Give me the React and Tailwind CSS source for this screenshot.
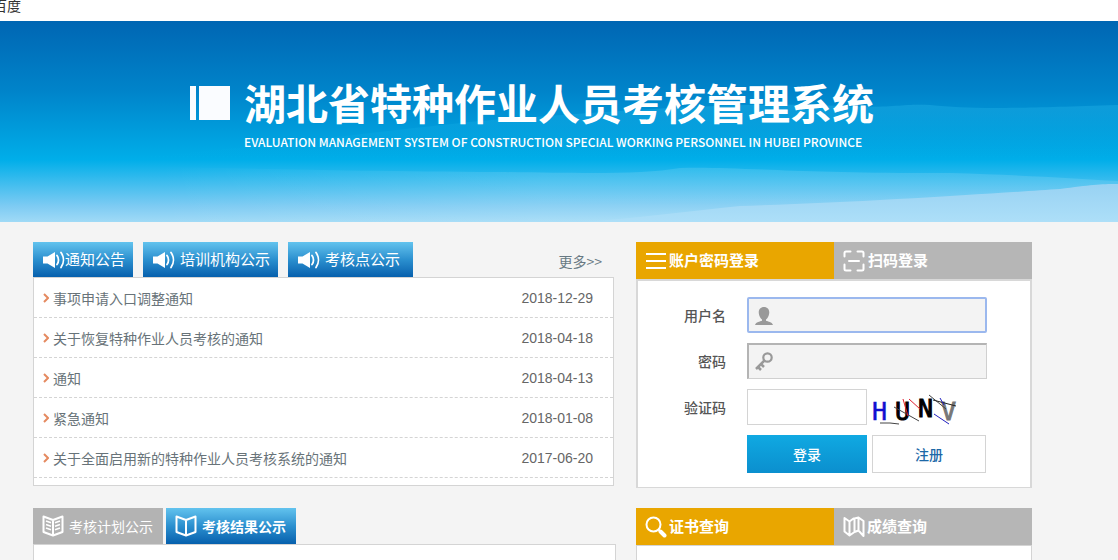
import React from 'react';

const notices = [
  ['事项申请入口调整通知', '2018-12-29'],
  ['关于恢复特种作业人员考核的通知', '2018-04-18'],
  ['通知', '2018-04-13'],
  ['紧急通知', '2018-01-08'],
  ['关于全面启用新的特种作业人员考核系统的通知', '2017-06-20'],
];

function SpeakerIcon() {
  return (
    <svg className="h-[18px] w-[22px] shrink-0" viewBox="0 0 22 18" fill="none" aria-hidden="true">
      <path d="M0 5.500h4.500L12 1v16l-7.500-4.500H0z" fill="#fff" />
      <path d="M14 4.500c2 2.500 2 6.500 0 9M18 1.500c3.200 4.500 3.200 10.500 0 15" stroke="#fff" strokeWidth="1.800" strokeLinecap="round" />
    </svg>
  );
}

function MenuIcon() {
  return (
    <svg className="h-5 w-5 shrink-0" viewBox="0 0 20 20" aria-hidden="true">
      <path d="M0 3h20M0 10h20M0 17h20" stroke="#fff" strokeWidth="2" />
    </svg>
  );
}

function ScanIcon() {
  return (
    <svg className="h-[22px] w-[22px] shrink-0" viewBox="0 0 22 22" fill="none" aria-hidden="true">
      <path d="M1.500 6.500V3q0-1.500 1.500-1.500H7.500M14.500 1.500h4.500q1.500 0 1.500 1.500v3.500M20.500 14.500v4.500q0 1.500-1.500 1.500h-4.500M7.500 20.500H3q-1.500 0-1.500-1.500v-4.500M6 11h10" stroke="#fff" strokeWidth="2" strokeLinecap="round" />
    </svg>
  );
}

function SearchIcon() {
  return (
    <svg className="h-[22px] w-[22px] shrink-0" viewBox="0 0 22 22" fill="none" aria-hidden="true">
      <circle cx="8.500" cy="8.500" r="7" stroke="#fff" strokeWidth="2" />
      <path d="M13.500 13.500l2 2" stroke="#fff" strokeWidth="2" />
      <path d="M15.500 15.500l4 4" stroke="#fff" strokeWidth="4" strokeLinecap="round" />
    </svg>
  );
}

function MapIcon() {
  return (
    <svg className="h-[22px] w-[22px] shrink-0" viewBox="0 0 22 22" fill="none" aria-hidden="true">
      <path d="M1.500 2l5 3.500v14l-5-4zM6.500 5.500l4-3h1v13.500l-5 3.500M11.500 2.500l4-1v13l-4 1.500M15.500 1.500l5 3.500v15l-5-5.500" stroke="#fff" strokeWidth="2" strokeLinejoin="round" />
    </svg>
  );
}

function BookIcon({ lines }) {
  return (
    <svg className="h-[22px] w-[22px] shrink-0" viewBox="0 0 22 22" fill="none" aria-hidden="true">
      <path d="M1.500 1.500L11 5l9.500-3.500v15.500L11 20.500 1.500 17zM11 5v15" stroke="#fff" strokeWidth="2" strokeLinejoin="round" />
      {lines && <path d="M4 6l5 1.800M4 9.500l5 1.800M4 13l5 1.800M18 6l-5 1.800M18 9.500l-5 1.800M18 13l-5 1.800" stroke="#fff" strokeWidth="1.500" />}
    </svg>
  );
}

function Banner() {
  return (
    <header className="relative h-[201px] overflow-hidden">
      <svg className="absolute inset-0 h-full w-full" viewBox="0 0 1118 201" preserveAspectRatio="none" aria-hidden="true">
        <defs>
          <linearGradient id="sky" x1="0" y1="0" x2="0" y2="1">
            <stop offset="0" stopColor="#0066b3" />
            <stop offset=".35" stopColor="#0084ca" />
            <stop offset=".69" stopColor="#00aee9" />
            <stop offset=".75" stopColor="#20b6ec" />
            <stop offset=".92" stopColor="#7dcbf3" />
            <stop offset="1" stopColor="#a0daf6" />
          </linearGradient>
          <linearGradient id="haze" x1="0" y1="0" x2="0" y2="1">
            <stop offset="0" stopColor="#19a6e0" stopOpacity=".6" />
            <stop offset="1" stopColor="#00b0ea" stopOpacity="0" />
          </linearGradient>
          <linearGradient id="mist" x1="0" y1="0" x2="1" y2="0">
            <stop offset="0" stopColor="#fff" stopOpacity="0" />
            <stop offset=".4" stopColor="#fff" stopOpacity=".12" />
            <stop offset="1" stopColor="#fff" stopOpacity=".12" />
          </linearGradient>
          <linearGradient id="shore" x1="0" y1="0" x2="0" y2="1">
            <stop offset="0" stopColor="#98d2f3" />
            <stop offset="1" stopColor="#addff8" />
          </linearGradient>
        </defs>
        <rect width="1118" height="201" fill="url(#sky)" />
        <path d="M100 140C300 122 380 110 480 100C620 90 720 82 820 84C890 89 900 82 930 84C970 88 1000 88 1118 84V140H100z" fill="url(#haze)" />
        <path d="M160 146C280 148 350 150 500 151C580 152 640 154 680 147C730 145 800 153 950 152C1020 154 1070 157 1118 160V201H160z" fill="url(#mist)" />
        <path d="M580 201C630 198 690 190 740 185C850 182 1000 172 1060 168C1090 164 1100 163 1118 163V201z" fill="url(#shore)" />
      </svg>
      <div className="relative flex gap-[14px] pt-[57px] pl-[190px] text-white">
        <svg className="mt-2 h-[34px] w-10 shrink-0" viewBox="0 0 40 34" aria-hidden="true">
          <path d="M0 0h6v34H0zM9 0h31v34H9z" fill="#fafcff" />
        </svg>
        <div className="whitespace-nowrap">
          <h1 className="text-[42px] leading-[48px] font-bold">湖北省特种作业人员考核管理系统</h1>
          <p className="text-xs leading-[32px] font-medium">
            EVALUATION MANAGEMENT SYSTEM OF CONSTRUCTION SPECIAL WORKING PERSONNEL IN HUBEI PROVINCE
          </p>
        </div>
      </div>
    </header>
  );
}

const blueTab = 'bg-linear-to-b from-[#62c3ee] via-[#2b90cf] to-[#0660ad] text-white';

function NoticePanel() {
  return (
    <section className="mr-0.5">
      <div className="flex items-start gap-[10px]">
        <button className={`flex h-[35px] items-center pr-2 pl-[10px] text-[15px] ${blueTab}`}>
          <SpeakerIcon />通知公告
        </button>
        <button className={`flex h-[35px] items-center gap-[5px] pr-2 pl-[10px] text-[15px] ${blueTab}`}>
          <SpeakerIcon />培训机构公示
        </button>
        <button className={`flex h-[35px] items-center gap-[5px] pr-[13px] pl-[10px] text-[15px] ${blueTab}`}>
          <SpeakerIcon />考核点公示
        </button>
        <a href="#more" className="mt-[9px] mr-3 ml-auto text-sm text-[#687983]">更多&gt;&gt;</a>
      </div>
      <div className="border border-[#d4d4d4] bg-white pb-[7px]">
        <ul>
          {notices.map(([title, date]) => (
            <li key={title} className="flex h-10 items-center border-b border-dashed border-[#d4d4d4] pr-5 pl-[9px] text-sm text-[#687379]">
              <svg className="mr-[4px] h-[10px] w-[6px]" viewBox="0 0 6 10" fill="none" aria-hidden="true">
                <path d="M1 1l4 4-4 4" stroke="#e58a60" strokeWidth="2" />
              </svg>
              <a href="#notice">{title}</a>
              <time className="ml-auto font-['Liberation_Sans',sans-serif] text-[#666]">{date}</time>
            </li>
          ))}
        </ul>
      </div>
    </section>
  );
}

function Captcha() {
  return (
    <svg className="h-9 w-[90px] overflow-visible" viewBox="0 0 90 36" fontFamily="DejaVu Sans Mono, monospace" fontSize="25" role="img" aria-label="验证码图片">
      <text x="0" y="31" fill="#1010d0" stroke="#1010d0" strokeWidth=".5">H</text>
      <text x="23" y="31" fill="#000" stroke="#000" strokeWidth="1">U</text>
      <text x="46" y="28" fill="#000" stroke="#000" strokeWidth="1">N</text>
      <text x="69" y="31" fill="#777" stroke="#777" strokeWidth="1">V</text>
      <g fill="none" strokeWidth="1">
        <path d="M8 34h10l9 1M22 18l25 14M57 6l17 14" stroke="#444" />
        <path d="M61 11l23 6" stroke="#222" />
        <path d="M31 10l5 17M37 10l11 10" stroke="#e02030" />
        <path d="M62 25l15 10M68 9l4 7" stroke="#2020c0" />
      </g>
    </svg>
  );
}

function LoginPanel() {
  return (
    <section>
      <div className="grid h-[37px] grid-cols-2 text-[15px] font-bold text-white">
        <button className="flex items-center gap-[3px] bg-[#e9a600] pl-[10px]"><MenuIcon />账户密码登录</button>
        <button className="flex items-center gap-[3px] bg-[#b6b6b6] pl-[9px]"><ScanIcon />扫码登录</button>
      </div>
      <form className="grid grid-cols-[88px_1fr] items-center gap-x-[21px] gap-y-[10px] border-2 border-b border-[#d8d8d8] bg-white pt-4 pr-[43px] pb-[14px] text-sm" onSubmit={(e) => e.preventDefault()}>
        <label htmlFor="user" className="text-right font-medium text-[#555]">用户名</label>
        <div className="relative">
          <input id="user" type="text" className="block h-9 w-full rounded-xs border-2 border-[#9bb8ee] bg-[#f3f3f3] pl-8 outline-none" />
          <svg className="pointer-events-none absolute top-[10px] left-2 h-[18px] w-[18px]" viewBox="0 0 18 18" fill="#999" aria-hidden="true">
            <path d="M9 0c3.700 0 5.600 2.700 5.200 6.300-.3 2.900-1.700 5.200-3.200 6.200v1.200c2 1 6 .8 7 4.300H0c1-3.500 5-3.300 7-4.300v-1.200C5.500 11.500 4.100 9.200 3.800 6.300 3.400 2.700 5.300 0 9 0z" />
          </svg>
        </div>
        <label htmlFor="pass" className="text-right font-medium text-[#555]">密码</label>
        <div className="relative">
          <input id="pass" type="password" className="block h-9 w-full border border-t-2 border-l-2 border-[#d0d0d0] border-t-[#b4b4b4] border-l-[#b4b4b4] bg-[#f3f3f3] pl-8 outline-none" />
          <svg className="pointer-events-none absolute top-[9px] left-2 h-[19px] w-[18px]" viewBox="0 0 18 19" fill="none" stroke="#999" aria-hidden="true">
            <circle cx="12.500" cy="5.500" r="4.200" strokeWidth="2.200" />
            <path d="M9.500 8.500L1 17M3 15l3 3M6 12l3 3" strokeWidth="2.500" />
          </svg>
        </div>
        <label htmlFor="code" className="text-right font-medium text-[#555]">验证码</label>
        <div className="flex gap-[5px]">
          <input id="code" type="text" className="block h-9 w-[120px] border border-[#d4d4d4] bg-white px-2 outline-none" />
          <Captcha />
        </div>
        <div className="col-start-2 flex gap-[5px] pr-px font-medium">
          <button type="submit" className="h-[38px] w-[120px] bg-linear-to-b from-[#10a9e2] to-[#0b8fce] text-white">登录</button>
          <button type="button" className="h-[38px] flex-1 border border-[#d4d4d4] bg-white text-[#1d68a7]">注册</button>
        </div>
      </form>
    </section>
  );
}

function ExamPanel() {
  return (
    <section className="flex flex-col">
      <div className="flex gap-[3px] text-sm">
        <button className="flex h-9 items-center gap-[5px] bg-[#b3b3b3] pr-[10px] pl-[9px] text-white"><BookIcon lines />考核计划公示</button>
        <button className={`flex h-9 items-center gap-[5px] pr-[10px] pl-[9px] font-bold ${blueTab}`}><BookIcon />考核结果公示</button>
      </div>
      <div className="flex-1 border border-b-0 border-[#d4d4d4] bg-white" />
    </section>
  );
}

function QueryPanel() {
  return (
    <section className="flex flex-col">
      <div className="grid h-[37px] grid-cols-2 text-[15px] font-bold text-white">
        <button className="flex items-center gap-[2px] bg-[#e9a600] pl-[9px]"><SearchIcon />证书查询</button>
        <button className="flex items-center gap-[2px] bg-[#b6b6b6] pl-[9px]"><MapIcon />成绩查询</button>
      </div>
      <div className="flex-1 border border-b-0 border-[#d4d4d4] bg-white" />
    </section>
  );
}

export default function App() {
  return (
    <div className="flex min-h-screen flex-col bg-[#f4f4f4] font-['Noto_Sans_CJK_SC',sans-serif]">
      <div className="h-[21px] overflow-hidden bg-white text-sm leading-[10px] text-[#333]">
        <a href="#baidu" className="-ml-[7px] block">百度</a>
      </div>
      <Banner />
      <main className="grid flex-1 grid-cols-[583fr_396fr] grid-rows-[auto_1fr] gap-x-5 gap-y-5 pt-5 pr-[86px] pl-[33px]">
        <NoticePanel />
        <LoginPanel />
        <ExamPanel />
        <QueryPanel />
      </main>
    </div>
  );
}
